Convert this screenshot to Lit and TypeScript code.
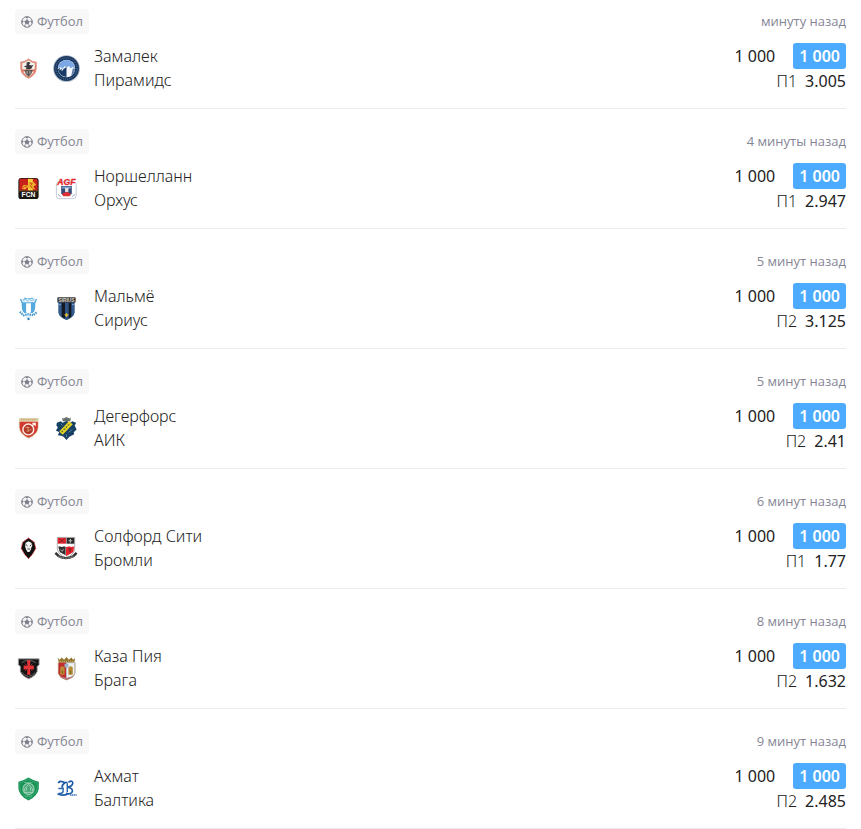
import { LitElement, html, svg, css, type SVGTemplateResult } from "lit";
import { customElement, property } from "lit/decorators.js";

interface Bet {
  home: string;
  away: string;
  homeLogo: SVGTemplateResult;
  awayLogo: SVGTemplateResult;
  ago: string;
  pick: string;
  odds: string;
}

const zamalek = svg`
  <path d="M5.5 7 Q10 7 14 3.5 Q18 7 22.500 7 V14 Q22 21 14 24.500 Q6 21 5.500 14Z" fill="#e08a78"/>
  <path d="M7.500 8.500 Q11 8 14 5.500 Q17 8 20.500 8.500 V13.500 Q20 19 14 22.500 Q8 19 7.500 13.500Z" fill="#f4f1ee"/>
  <path d="M12 8 L14 7 L16 8 L14.500 10 L17 11 L19 10 L17 14 L15 15 H11 L12 13 L9 12 L12 11Z" fill="#3a3a3c"/>
  <path d="M7 15 H21 L20.300 17 H7.700Z" fill="#d9705c"/>
  <path d="M10 15.500 H18.500 L17 19.500 L14 22.500 L11 19.500Z" fill="#5d5552"/>
  <path d="M12.500 16.500v3M15.500 16.500v3" stroke="#e9dcd6" stroke-width=".7"/>`;

const pyramids = svg`
  <circle cx="14" cy="14" r="13.800" fill="#a3afbf"/>
  <circle cx="14" cy="14" r="12.900" fill="#17365f"/>
  <circle cx="14" cy="14" r="11" fill="none" stroke="#6d85a8" stroke-width="1" stroke-dasharray="1 1.200"/>
  <circle cx="14" cy="14" r="9" fill="#f5f8fc"/>
  <path d="M5.200 14 A8.800 8.800 0 0 1 22.800 14 L20 12.500 L18.500 14 L16.500 11.500 L14 13 L12 11.500 L10 14.500 L8 12.500Z" fill="#7ba8e4"/>
  <path d="M5.200 15 L7 13 V16 L9 14 V17 L11 14.500 L14 12.500 V22.800 A8.800 8.800 0 0 1 5.200 15Z" fill="#183a67"/>
  <path d="M20.500 14 L22.800 14 A8.800 8.800 0 0 1 19 21.300Z" fill="#5d7da8"/>`;

const nordsjaelland = svg`
  <rect x="3.500" y="3" width="21" height="22" rx="3" fill="#1b1712"/>
  <path d="M5.500 4 H22.500 L23.500 6 V16 H4.500 V5Z" fill="#c9211b"/>
  <path d="M13.500 4 H18.500 V16 H13.500Z" fill="#f6d23b"/>
  <path d="M7 14 L9 10 L13 11 L15 7 L19 7 L22 10 L19 12 L21 15 L17 14 L13 13 L10 15Z" fill="#efb529"/>
  <path d="M15 8 L18 9 L16 11 L18 14 M8 14 L10.500 11.500 L12.500 12.500" fill="none" stroke="#c9211b" stroke-width=".8"/>
  <path d="M4 16.500 H24" stroke="#8f7730" stroke-width=".6"/>
  <text x="14" y="22.500" text-anchor="middle" font-family="Liberation Sans, sans-serif" font-size="7" font-weight="700" fill="#fff">FCN</text>`;

const aarhus = svg`
  <rect x="3.500" y="7" width="20.500" height="17.500" rx="3" fill="#fff" stroke="#b4bccb" stroke-width=".8"/>
  <text x="14" y="10" text-anchor="middle" font-family="Liberation Sans, sans-serif" font-size="9" font-weight="700" font-style="italic" fill="#e3262b" stroke="#e3262b" stroke-width=".3">AGF</text>
  <path d="M8.500 11.500 H19.500 V19 L18 21 H10 L8.500 19Z" fill="#354b78"/>
  <path d="M9.500 12 H18.500 V14 H9.500Z" fill="#7ea2ce"/>
  <path d="M12.500 13.500 H16 V17 L14.300 18.500 L12.500 17Z" fill="#e9e4e4"/>
  <path d="M9.500 19 L14 17.500 L18.500 19 L17.500 22 H10.500Z" fill="#dd3035"/>
  <path d="M5 20 L8 22.500 M23 20 L20 22.500" stroke="#7487a8" stroke-width=".8"/>`;

const malmo = svg`
  <path d="M5 4 Q9 5 10 2.500 Q14 4 18 2.500 Q19 5 23 4 L21 9 V12 Q21 19 14 22 Q7 19 7 12 V9Z" fill="#55a9dc"/>
  <path d="M6.500 4 L21.500 4 L20 7.500 H8Z" fill="#e6f3fb"/>
  <path d="M8 5.500 L11 4.500 L13 6 L15 4.500 L17 6 L20 4.500" fill="none" stroke="#55a9dc" stroke-width=".8"/>
  <path d="M11.500 8.500 H16.500 V18 L14 19.500 L11.500 18Z" fill="#fff"/>
  <path d="M5 17.500 L9 21 L14 20 L19 21 L23 17.500" fill="none" stroke="#fff" stroke-width="3.800"/>
  <path d="M5 17.500 L9 21 L14 20 L19 21 L23 17.500" fill="none" stroke="#4a9bcc" stroke-width="2.400" stroke-dasharray="1.500 .8"/>
  <path d="M11 22.500 L14 26.500 L17 22.500Z" fill="#c7e3f4"/>
  <circle cx="14" cy="25" r="1.200" fill="#2678af"/>`;

const sirius = svg`
  <path d="M5.500 7 H22.500 V18 Q22 23 14 26 Q6 23 5.500 18Z" fill="#315a8d"/>
  <path d="M9 8 H12.500 V24.500 L9 22.500Z M16 8 H19 V22.500 L16 24.500Z" fill="#151a22"/>
  <path d="M12.500 8 H16 V25 L14 26 L12.500 25Z" fill="#345583"/>
  <rect x="4.500" y="2.300" width="19" height="5.500" rx=".6" fill="#3a3734"/>
  <text x="14" y="6.900" text-anchor="middle" font-family="Liberation Sans, sans-serif" font-size="5" font-weight="700" fill="#d8d4cd">SIRIUS</text>
  <path d="M6 10 H8 M20 10 H22" stroke="#a7bdd8" stroke-width=".9"/>
  <path d="M14 18.500 L14.800 20 L16.500 20.500 L15 21.500 L14 23 L13 21.500 L11.500 20.500 L13.200 20Z" fill="#eac62e"/>`;

const degerfors = svg`
  <path d="M4 3 H24.500 V13 Q24 21 14.200 24.500 Q4.500 21 4 13Z" fill="#e3d6b4"/>
  <path d="M4.800 7 H23.700 V13 Q23 20 14.200 23.500 Q5.500 20 4.800 13Z" fill="#d23a30"/>
  <path d="M6 4.800 H23" stroke="#c5ad74" stroke-width="1.700" stroke-dasharray="1.300 .6"/>
  <circle cx="13.800" cy="15" r="5.600" fill="#b3372a" stroke="#fbeee4" stroke-width="1.500"/>
  <path d="M17.500 11 L20.800 9 M18 8.800 H21 V11.500" fill="none" stroke="#fbeee4" stroke-width="1.300"/>
  <path d="M11 13 H15 M13 12 L14 17 M12 17 L17 15" stroke="#d99a70" stroke-width="1"/>`;

const aik = svg`
  <path d="M4 8 L8 6.500 L10 8 L14 6 L18 8 L20 6.500 L24 8 L22.500 11 L24.500 15 L21.500 18 L22 20 L19 21.500 L17 22.500 L14 26 L11 22.500 L8.500 21.500 L5 21 L6.500 18 L3 16 L5 13 L3.500 11Z" fill="#174164"/>
  <path d="M9.500 2.500 L11 3.500 L14 2 L17 3.500 L18.500 2.500 L18 6.500 H10Z" fill="#66706c"/>
  <path d="M6.500 17 L16.500 6.500 L20.500 9.500 L10 20.500Z" fill="#e8d321"/>
  <path d="M9 17.500 L18 8.500" stroke="#59733d" stroke-width="1.600" stroke-dasharray="1.600 1.500"/>
  <path d="M8 9 L10 11 M20 15 L16 18 M14 20 V23" stroke="#55809b" stroke-width="1"/>`;

const salford = svg`
  <path d="M14 3.200 L20 7.500 L21.500 14 L18 20 L14 24.500 L10 20 L6.500 14 L8 7.500Z" fill="#111" stroke="#db2630" stroke-width=".9" stroke-dasharray="1.500 .7"/>
  <path d="M11 8 L14 6.500 L17 8 L18 11 L17 13 L16.500 15 L15 17.500 H13 L11.500 15 L10.500 12Z" fill="#f3f3f3"/>
  <path d="M11.500 10 L13 11.500 M17 10 L15.500 11.500 M13 14.500 H15.500" stroke="#1a1a1a" stroke-width=".9"/>`;

const bromley = svg`
  <path d="M4.500 2.500 H22.500 V14 Q22 20 13.500 24 Q5 20 4.500 14Z" fill="#f7f7f7" stroke="#555" stroke-width=".5"/>
  <path d="M5 3 H13.500 V9 H5Z" fill="#e4232c"/>
  <path d="M14 3 H22 V9 H14Z" fill="#262626"/>
  <path d="M6.500 4 L12 8 M12 4 L6.500 8" stroke="#86252a" stroke-width="1"/>
  <path d="M16 6 H20 M18 4 V8" stroke="#b8b8b8" stroke-width="1.200"/>
  <path d="M13.500 12 H22 L21 17.500 L13.500 22Z" fill="#e4232c"/>
  <path d="M5.500 12 H13 V21 L7 17.500Z" fill="#2d2d2d"/>
  <path d="M5 11 L7 10 L9 11.500 L12 10 L14 11.500 L17 10 L19 11.500 L22 10.500" fill="none" stroke="#fff" stroke-width="1.800"/>
  <path d="M7.500 15 L9.500 17 L11 14.500" fill="none" stroke="#aaa" stroke-width="1"/>
  <path d="M16 14.500 H19 M17.500 14.500 V18" fill="none" stroke="#6e2226" stroke-width="1.200"/>
  <path d="M2.500 18.500 L6 22 Q13.500 26 21 22 L24.500 18.500" fill="none" stroke="#303030" stroke-width="2.500"/>
  <path d="M5.500 22 Q13.500 26 21.500 22" fill="none" stroke="#c7c7c7" stroke-width=".9" stroke-dasharray="1 .7"/>`;

const casaPia = svg`
  <path d="M3.500 4 H25 V10 L23 12 V17 Q21 22 14.200 24.500 Q7.500 22 5.500 17 V12 L3.500 10Z" fill="#151515" stroke="#a0a0a0" stroke-width=".9"/>
  <path d="M7 8 Q14 3 21.500 8 M7.500 18 Q9 21 14 22.500 Q19 21 21 18" fill="none" stroke="#737373" stroke-width=".9"/>
  <path d="M12.500 5.500 H16 L15.500 11.500 L19.500 11 V15 L15.500 14.500 L16 20.500 H12.500 L13 14.500 L9 15 V11 L13 11.500Z" fill="#ee3338"/>
  <path d="M10.500 9 L18 16.500 M18 9 L10.500 16.500" stroke="#c43a3e" stroke-width=".8"/>`;

const braga = svg`
  <path d="M5 3 L7 5 L9 2.500 L11.500 5 L14 2 L16.500 5 L19 2.500 L21 5 L23 3 L22 8 H6Z" fill="#92742c"/>
  <path d="M7 6.500 H21" stroke="#d4b970" stroke-width=".9" stroke-dasharray="1.300 .8"/>
  <path d="M5.500 8 H14 V26 Q6.500 23 5.500 19Z" fill="#c42b31"/>
  <path d="M14 8 H23 V19 Q22 23 14 26Z" fill="#edf0f3" stroke="#9aa9bb" stroke-width=".5"/>
  <path d="M6.500 21 Q14 26 22 21 L20 23.500 L14 26 L8 23.500Z" fill="#b57580"/>
  <path d="M7.500 13 L8.500 12 H11 L12 13 V20.500 H7.500Z M16 13 L17 12 H19.500 L20.500 13 V20.500 H16Z" fill="#b88b34"/>
  <path d="M9.800 16 V19.500 M18.200 16 V19.500" stroke="#866626" stroke-width="1.200"/>
  <path d="M12 9 H16 V12 L14 14 L12 12Z" fill="#9db4cf"/>
  <path d="M5.500 8 V18 Q6 23 14 25.700 Q22 23 22.700 18 V8" fill="none" stroke="#a88d54" stroke-width=".6"/>`;

const akhmat = svg`
  <path d="M3.500 7 Q9 6 14 2.700 Q19 6 24.700 7 V14 Q23.500 22 14 26.500 Q4.500 22 3.500 14Z" fill="#159456"/>
  <path d="M5 8 Q10 7 14 4.500 Q18 7 23 8 V14 Q22 20.500 14 24.500 Q6 20.500 5 14Z" fill="none" stroke="#4dac7d" stroke-width=".7"/>
  <circle cx="14" cy="14.500" r="5.800" fill="#45a776" stroke="#94cdb0" stroke-width="1.200"/>
  <path d="M10 17 V14 L12 12 L14 10 L16 12 L18 14 V17 M12 16 V13 M16 16 V13 M9 18 H19" fill="none" stroke="#a4d5bc" stroke-width="1"/>
  <path d="M10 7.800 H18 M10.500 21.800 H17.500" stroke="#83c5a3" stroke-width="1" stroke-dasharray="1.300 .6"/>`;

const baltika = svg`
  <path d="M5.500 8.500 Q7 5.500 10 7 Q12 8.500 15 7.500 M12.500 8 Q9 10 9.500 13 M16 7.500 Q20.500 5 20.500 8.500 Q20 12 15 12.500 Q21 13.500 20 17.500 Q18 20.500 13.500 19" fill="none" stroke="#1d5ba6" stroke-width="1.800"/>
  <path d="M14.800 8.500 V17.500 M10.500 13 V17 Q10 19.500 6 19 M5.500 14 H10" fill="none" stroke="#2869ae" stroke-width="1.500"/>
  <path d="M4.700 19.500 Q9 22 15 20" fill="none" stroke="#1d5ba6" stroke-width="1.700"/>
  <path d="M17.500 20.800 H24.500" stroke="#6692c3" stroke-width="2.200" stroke-dasharray="1.400 .5"/>`;

const bets: Bet[] = [
  { home: "Замалек", away: "Пирамидс", homeLogo: zamalek, awayLogo: pyramids, ago: "минуту назад", pick: "П1", odds: "3.005" },
  { home: "Норшелланн", away: "Орхус", homeLogo: nordsjaelland, awayLogo: aarhus, ago: "4 минуты назад", pick: "П1", odds: "2.947" },
  { home: "Мальмё", away: "Сириус", homeLogo: malmo, awayLogo: sirius, ago: "5 минут назад", pick: "П2", odds: "3.125" },
  { home: "Дегерфорс", away: "АИК", homeLogo: degerfors, awayLogo: aik, ago: "5 минут назад", pick: "П2", odds: "2.41" },
  { home: "Солфорд Сити", away: "Бромли", homeLogo: salford, awayLogo: bromley, ago: "6 минут назад", pick: "П1", odds: "1.77" },
  { home: "Каза Пия", away: "Брага", homeLogo: casaPia, awayLogo: braga, ago: "8 минут назад", pick: "П2", odds: "1.632" },
  { home: "Ахмат", away: "Балтика", homeLogo: akhmat, awayLogo: baltika, ago: "9 минут назад", pick: "П2", odds: "2.485" },
];

@customElement("bet-row")
export class BetRow extends LitElement {
  @property({ attribute: false }) bet!: Bet;

  static styles = css`
    :host {
      display: block;
    }
    .head,
    .body,
    .stake,
    .pick,
    .logos,
    .sport {
      display: flex;
    }
    .head,
    .body {
      justify-content: space-between;
    }
    .head {
      align-items: flex-start;
      margin-bottom: 9px;
      color: #868695;
      font-family: "Open Sans", "Noto Sans", sans-serif;
      font-size: 13px;
      line-height: 24px;
    }
    .sport {
      align-items: flex-start;
      gap: 4px;
      height: 25px;
      padding: 0 6px;
      border-radius: 4px;
      background: #f8f8f8;
    }
    .ball {
      align-self: center;
      width: 12px;
      height: 12px;
    }
    .match {
      display: flex;
      align-items: center;
      gap: 14px;
    }
    .logos {
      gap: 11px;
    }
    .logo {
      width: 27px;
      height: 27px;
    }
    .teams {
      font-weight: 300;
      line-height: 24px;
      color: #222;
    }
    .team {
      display: block;
    }
    .stake {
      align-items: center;
      justify-content: flex-end;
      gap: 18px;
      line-height: 26px;
    }
    .amount {
      padding: 0 6px;
      border-radius: 3px;
      background: #4dabff;
      color: #fff;
      font-weight: 600;
    }
    .pick {
      justify-content: flex-end;
      gap: 8px;
      line-height: 24px;
    }
    .outcome {
      font-weight: 300;
    }
  `;

  render() {
    const b = this.bet;
    return html`
      <div class="head">
        <span class="sport">
          <svg class="ball" viewBox="0 0 12 12" aria-hidden="true">
            <circle cx="6" cy="6" r="5.300" fill="none" stroke="#7f7f8e" stroke-width="1" />
            <path d="M6 3.600 L8.500 5.400 L7.500 8.200 H4.500 L3.500 5.400Z M3.800 .8 L6 2.300 L8.200 .8Z M.8 4 L2.400 5.700 L.7 7.700Z M11.200 4 L9.600 5.700 L11.300 7.700Z M2.500 8.800 L4.600 9.400 L4.900 11.300Z M9.500 8.800 L7.400 9.400 L7.100 11.300Z" fill="#7f7f8e" />
            <path d="M6 4 V2 M8 5.600 L10 5 M7.300 7.800 L8.300 9.500 M4.700 7.800 L3.700 9.500 M4 5.600 L2 5" stroke="#7f7f8e" stroke-width=".6" />
          </svg>
          Футбол
        </span>
        <time>${b.ago}</time>
      </div>
      <div class="body">
        <div class="match">
          <div class="logos">
            <svg class="logo" viewBox="0 0 28 28" aria-hidden="true">${b.homeLogo}</svg>
            <svg class="logo" viewBox="0 0 28 28" aria-hidden="true">${b.awayLogo}</svg>
          </div>
          <div class="teams">
            <span class="team">${b.home}</span>
            <span class="team">${b.away}</span>
          </div>
        </div>
        <div>
          <div class="stake"><span>1 000</span><span class="amount">1 000</span></div>
          <div class="pick"><span class="outcome">${b.pick}</span><span>${b.odds}</span></div>
        </div>
      </div>
    `;
  }
}

@customElement("app-root")
export class AppRoot extends LitElement {
  static styles = css`
    :host {
      display: block;
      padding: 9px 15px 0;
      background: #fff;
      color: #222;
      font: 400 16px/24px "Noto Sans", "Open Sans", sans-serif;
    }
    .list {
      margin: 0;
      padding: 0;
      list-style: none;
    }
    .item {
      padding-bottom: 15px;
      border-bottom: 1px solid #ebebeb;
    }
    .item + .item {
      padding-top: 20px;
    }
  `;

  render() {
    return html`
      <ul class="list">
        ${bets.map((bet) => html`<li class="item"><bet-row .bet=${bet}></bet-row></li>`)}
      </ul>
    `;
  }
}
